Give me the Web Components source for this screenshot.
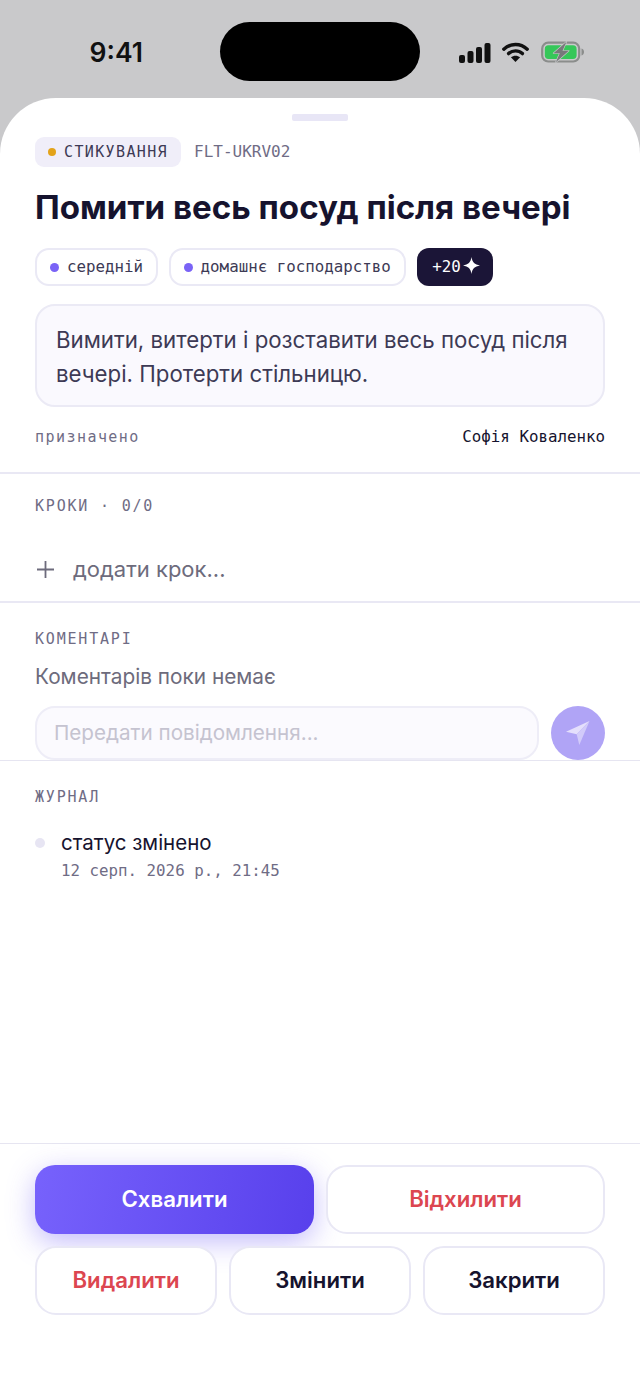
<!DOCTYPE html>
<html lang="uk"><head><meta charset="utf-8"><title>Task</title>
<style>
html,body{margin:0;padding:0;background:#c9c9cb}
body{width:640px;height:1391px;overflow:hidden;font-family:Inter,"Noto Sans",sans-serif;color:#16132e;display:flex;flex-direction:column}
task-sheet{flex:1}
</style></head><body>
<status-bar></status-bar>
<task-sheet></task-sheet>
<script>
const MONO='"DejaVu Sans Mono","Liberation Mono",monospace';
function def(name,html){
  class C extends HTMLElement{
    constructor(){super();const r=this.attachShadow({mode:'open'});const t=document.createElement('template');t.innerHTML=html;r.appendChild(t.content.cloneNode(true));}
  }
  customElements.define(name,C);
}
def('status-bar',`<style>
:host{display:flex;height:98px;box-sizing:border-box;align-items:flex-start;position:relative;background:#c9c9cb}
.time{position:absolute;left:89.5px;top:36px;font:600 26.5px/32px Inter,sans-serif;color:#111}
.island{width:200px;height:59px;border-radius:30px;background:#000;margin:22px auto 0}
.icons{position:absolute;left:459px;top:41px;display:flex;align-items:center;gap:11px}
svg{display:block}
</style>
<span class="time">9:41</span><div class="island"></div>
<div class="icons">
<svg width="32" height="21" viewBox="0 0 32 21"><rect x="0" y="13" width="6" height="8" rx="2" fill="#111"/><rect x="8.5" y="9" width="6" height="12" rx="2" fill="#111"/><rect x="17" y="5" width="6" height="16" rx="2" fill="#111"/><rect x="25.5" y="1" width="6" height="20" rx="2" fill="#111"/></svg>
<svg width="27" height="20" viewBox="0 0 27 20" fill="none"><path d="M1.8 7.2C8.4 .9 18.6 .9 25.2 7.2" stroke="#111" stroke-width="3.4" stroke-linecap="round"/><path d="M6.6 11.6c3.9-3.6 9.9-3.6 13.8 0" stroke="#111" stroke-width="3.4" stroke-linecap="round"/><path d="M13.5 20l-4.6-4.7c2.6-2.2 6.6-2.2 9.2 0z" fill="#111"/></svg>
<svg width="44" height="22" viewBox="0 0 44 22" style="margin-left:1px"><rect x="1.2" y="1.7" width="37" height="18.8" rx="6" fill="none" stroke="#8b8d8c" stroke-width="2.2"/><rect x="3.8" y="4.3" width="31.8" height="13.6" rx="3.6" fill="#35c759"/><path d="M40.5 7.5c1.6.5 2.5 1.8 2.5 3.5s-.9 3-2.5 3.5z" fill="#8b8d8c"/><path d="M25.5 .8 12.5 12.2h6.3L14.8 21.2 27.8 9.8h-6.3z" fill="#77797b" stroke="#c9c9cb" stroke-width="1.3" stroke-linejoin="round" paint-order="stroke"/></svg>
</div>`);

def('status-chip',`<style>
:host{display:inline-flex;align-items:center;gap:8px;height:30px;box-sizing:border-box;padding:0 13px;background:#f0eef9;border-radius:9px;font:500 15px/1 ${MONO};letter-spacing:1.37px;color:#3d3a55}
i{width:8px;height:8px;border-radius:50%;background:#e3a31a}
</style><i></i><slot></slot>`);

def('pill-tag',`<style>
:host{display:inline-flex;align-items:center;gap:8px;height:38px;box-sizing:border-box;padding:0 13px;border:2px solid #eae9f5;border-radius:14px;background:#fff;font:400 15.8px/1 ${MONO};color:#3d3a55}
i{width:9px;height:9px;border-radius:50%;background:#7a63f6}
</style><i></i><slot></slot>`);

def('xp-badge',`<style>
:host{display:inline-flex;align-items:center;gap:2px;height:38px;box-sizing:border-box;margin-left:1px;padding:0 13px 0 15px;border-radius:12px;background:#1b1537;color:#fff;font:500 15.8px/1 ${MONO}}
svg{display:block;margin-top:-4px}
</style><slot></slot><svg width="17" height="17" viewBox="0 0 16 16"><path d="M8 0c.7 4.9 3 7.2 8 8-5 .8-7.3 3.1-8 8-.7-4.9-3-7.2-8-8 5-.8 7.3-3.1 8-8z" fill="#fff"/></svg>`);

def('mono-label',`<style>
:host{display:block;font:500 15px/20px ${MONO};margin-bottom:-2px;letter-spacing:1.8px;color:#6f6c85}
</style><slot></slot>`);

def('action-btn',`<style>
:host{display:flex;align-items:center;justify-content:center;height:69px;box-sizing:border-box;border:2px solid #e9e8f5;border-radius:21px;background:#fff;font:600 22.2px/1 Inter,sans-serif;color:#16132e;position:relative}
:host([tone=danger]){color:#dc4650}
:host([tone=primary]){border:0;border-radius:20px;color:#fff;background:linear-gradient(100deg,#7762fc,#5840ec);box-shadow:0 8px 28px rgba(100,80,245,.38)}
</style><slot></slot>`);

def('comment-box',`<style>
:host{display:flex;gap:12px;height:54px}
.in{flex:1;box-sizing:border-box;border:2px solid #eeedf7;border-radius:20px;background:#fbfafe;padding:0 17px;display:flex;align-items:center;font:400 20.65px/1 Inter,sans-serif;color:#c5c3d0}
.send{width:54px;height:54px;border-radius:50%;background:#b0a4f6;display:flex;align-items:center;justify-content:center}
svg{display:block}
</style><div class="in">Передати повідомлення...</div>
<div class="send"><svg width="24" height="24" viewBox="0 0 24 24"><path d="M23.5 0 0 10.7l10.7 2.6z" fill="#e4dffc"/><path d="M23.5 0 10.7 13.3 13.3 24z" fill="#d2cbfa"/></svg></div>`);

def('log-entry',`<style>
:host{display:grid;grid-template-columns:10px 1fr;column-gap:16px;align-items:start}
i{width:10px;height:10px;border-radius:50%;background:#e7e5f3;margin-top:9px}
.t{font:400 20.5px/28px Inter,sans-serif;color:#16132e}
.d{font:400 15.8px/18px ${MONO};color:#6f6c85;margin-top:5px}
</style><i></i><div><div class="t"><slot></slot></div><div class="d"><slot name="date"></slot></div></div>`);

def('task-sheet',`<style>
:host{display:flex;flex-direction:column;background:#fff;border-radius:56px 56px 0 0;min-height:0}
.handle{width:56px;height:7px;border-radius:2px;background:#e8e6f6;margin:16px auto 16px}
.top{padding:0 35px}
.row{display:flex;align-items:center}
h1{margin:20px 0 0;font:700 33.1px/40px Inter,sans-serif;color:#16132e}
.code{font:400 16px/1 ${MONO};color:#6f6c85;margin-left:13px}
.tags{display:flex;gap:10.5px;margin-top:21px}
.desc{box-sizing:border-box;height:103px;margin-top:18px;border:2px solid #ebeaf5;border-radius:20px;background:#faf9fe;padding:17px 19px;font:400 22.25px/34px Inter,sans-serif;color:#3d3a55}
.assign{display:flex;justify-content:space-between;align-items:center;height:18px;margin-top:21px;font:400 15px/18px ${MONO};color:#6f6c85;letter-spacing:1.45px}
.assign b{font-weight:500;font-size:15.8px;color:#16132e;letter-spacing:0}
.s1{margin-top:26px;border-top:2px solid #e9e8f4}
.sec{padding:0 35px}
.steps{height:129px;box-sizing:border-box;padding-top:22px;border-bottom:2px solid #e9e8f4;display:flex;flex-direction:column}
.add{display:flex;align-items:center;gap:18px;margin-top:35px;height:40px;font:400 22px/40px Inter,sans-serif;color:#6d6b7c}
.comments{height:158px;box-sizing:border-box;padding-top:26px;border-bottom:1px solid #e6e5f1;display:flex;flex-direction:column}
.empty{font:400 20.8px/28px Inter,sans-serif;color:#6d6b7c;margin-top:16px;margin-bottom:15px}
.log{flex:1;box-sizing:border-box;padding-top:26px;display:flex;flex-direction:column;gap:24px}
.foot{border-top:1px solid #e6e5f1;padding:21px 35px 76px;display:flex;flex-direction:column;gap:12px}
.foot div{display:grid;gap:12px}
.a{grid-template-columns:1fr 1fr}
.b{grid-template-columns:1fr 1fr 1fr}
svg{display:block}
</style>
<div class="handle"></div>
<div class="top">
  <div class="row"><status-chip>СТИКУВАННЯ</status-chip><span class="code">FLT-UKRV02</span></div>
  <h1>Помити весь посуд після вечері</h1>
  <div class="tags"><pill-tag>середній</pill-tag><pill-tag>домашнє господарство</pill-tag><xp-badge>+20</xp-badge></div>
  <div class="desc">Вимити, витерти і розставити весь посуд після вечері. Протерти стільницю.</div>
  <div class="assign"><span>призначено</span><b>Софія Коваленко</b></div>
</div>
<div class="s1"></div>
<div class="sec steps">
  <mono-label>КРОКИ · 0/0</mono-label>
  <div class="add"><svg width="20" height="20" viewBox="0 0 20 20"><path d="M10.5 2v17M2 10.5h17" stroke="#6d6b7c" stroke-width="1.8"/></svg>додати крок...</div>
</div>
<div class="sec comments">
  <mono-label>КОМЕНТАРІ</mono-label>
  <div class="empty">Коментарів поки немає</div>
  <comment-box></comment-box>
</div>
<div class="sec log">
  <mono-label>ЖУРНАЛ</mono-label>
  <log-entry>статус змінено<span slot="date">12 серп. 2026 р., 21:45</span></log-entry>
</div>
<div class="foot">
  <div class="a"><action-btn tone="primary">Схвалити</action-btn><action-btn tone="danger">Відхилити</action-btn></div>
  <div class="b"><action-btn tone="danger">Видалити</action-btn><action-btn>Змінити</action-btn><action-btn>Закрити</action-btn></div>
</div>`);
</script>
</body></html>
